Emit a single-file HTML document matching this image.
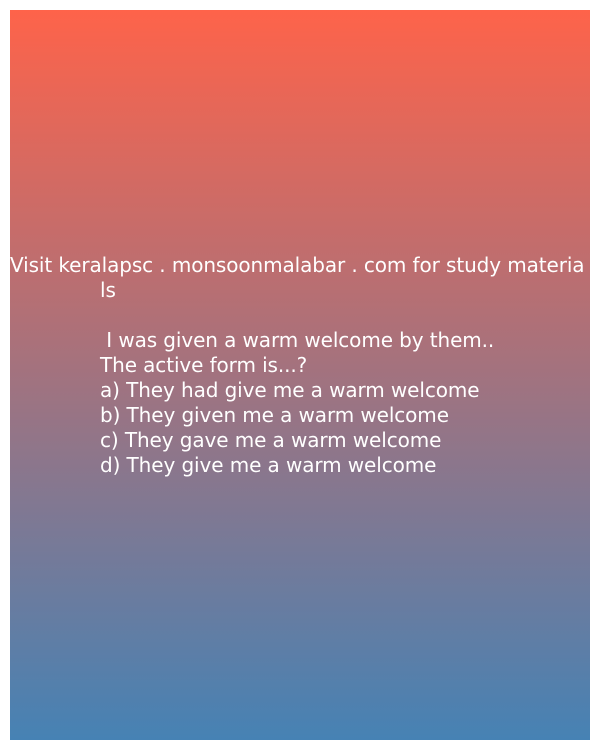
<!DOCTYPE html>
<html><head><style>
html,body{margin:0;padding:0;width:600px;height:750px;background:#fff;overflow:hidden}
#bg{position:absolute;left:10px;top:10px;width:580px;height:730px;background:linear-gradient(#fe634a,#4682b4)}
.l{position:absolute;color:#fff;font-family:"DejaVu Sans","Liberation Sans",sans-serif;font-size:20px;line-height:25px;white-space:nowrap;letter-spacing:-0.1px}
</style></head><body>
<div id="bg"></div>
<div class="l" style="left:10px;top:253px">Visit keralapsc . monsoonmalabar . com for study materia</div>
<div class="l" style="left:100px;top:278px">ls</div>
<div class="l" style="left:100px;top:328px">&nbsp;I was given a warm welcome by them..</div>
<div class="l" style="left:100px;top:353px">The active form is...?</div>
<div class="l" style="left:100px;top:378px">a) They had give me a warm welcome</div>
<div class="l" style="left:100px;top:403px">b) They given me a warm welcome</div>
<div class="l" style="left:100px;top:428px">c) They gave me a warm welcome</div>
<div class="l" style="left:100px;top:453px">d) They give me a warm welcome</div>
</body></html>
